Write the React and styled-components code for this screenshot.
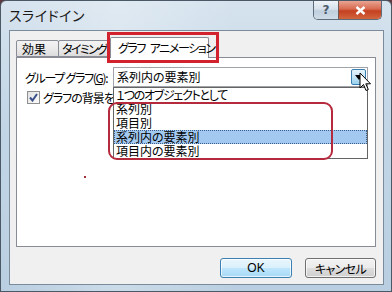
import React from 'react';
import styled, { createGlobalStyle } from 'styled-components';

const GlobalStyle = createGlobalStyle`
    html, body {
        margin: 0;
        padding: 0;
        background: #5a3a40;
    }
    * {
        box-sizing: border-box;
    }
`;

const JP = `"Noto Sans CJK JP", "Noto Sans", "Liberation Sans", sans-serif`;

// Fenêtre principale (cadre Aero)
const Window = styled.div`
    width: 392px;
    height: 292px;
    display: flex;
    flex-direction: column;
    border: 1px solid #4b5866;
    border-radius: 6px 6px 0 0;
    background:
        linear-gradient(90deg, rgba(255,255,255,0) 0%, rgba(255,255,255,0.25) 30%, rgba(255,255,255,0) 60%),
        linear-gradient(180deg, #d6e3ee 0%, #c2d6e6 40%, #b9cfe1 100%);
    font-family: ${JP};
    color: #000;
    overflow: hidden;
`;

const TitleBar = styled.div`
    height: 29px;
    display: flex;
    align-items: flex-start;
    padding: 0 9px 0 8px;
`;

const Title = styled.div`
    font-size: 14px;
    line-height: 29px;
    font-feature-settings: "palt";
    color: #1a1a1a;
    letter-spacing: 0.5px;
`;

const Controls = styled.div`
    margin-left: auto;
    display: flex;
    border: 1px solid #5d6b7a;
    border-top: none;
    border-radius: 0 0 5px 5px;
    overflow: hidden;
    height: 19px;
`;

const CtrlButton = styled.div`
    width: ${(p) => p.w}px;
    display: flex;
    align-items: center;
    justify-content: center;
    background: ${(p) => p.close
        ? 'linear-gradient(180deg, #e8a493 0%, #d8694f 45%, #c4401f 55%, #d2663e 100%)'
        : 'linear-gradient(180deg, #eef3f8 0%, #d6e1ec 45%, #c0cfdd 55%, #cfdce8 100%)'};
    border-left: ${(p) => p.close ? '1px solid #6d5a56' : 'none'};
    color: ${(p) => p.close ? '#fff' : '#4a5a6c'};
    font-family: "DejaVu Sans", sans-serif;
    font-weight: bold;
    font-size: 12px;
`;

const Client = styled.div`
    flex: 1;
    margin: 0 7px 7px 8px;
    background: #f0f0f0;
    border: 1px solid #7a8b9c;
    display: flex;
    flex-direction: column;
    padding: 6px 7px 6px 6px;
`;

const TabStrip = styled.div`
    display: flex;
    align-items: flex-end;
    height: 20px;
    padding-left: 1px;
    position: relative;
    z-index: 2;
`;

const Tab = styled.div`
    position: relative;
    height: ${(p) => (p.active ? 21 : 17)}px;
    width: ${(p) => p.w}px;
    margin-left: -1px;
    margin-bottom: ${(p) => (p.active ? -1 : 0)}px;
    padding-left: ${(p) => p.pad}px;
    border: 1px solid #898c95;
    border-bottom: ${(p) => (p.active ? 'none' : '1px solid #898c95')};
    border-radius: 2px 2px 0 0;
    background: ${(p) => (p.active ? '#fff' : 'linear-gradient(180deg, #f3f3f3 0%, #ebebeb 50%, #dcdcdc 100%)')};
    font-size: 12px;
    letter-spacing: ${(p) => p.ls || 0}px;
    line-height: ${(p) => (p.active ? 19 : 16)}px;
    font-feature-settings: "palt";
    white-space: nowrap;
`;

const TabMark = styled.div`
    position: absolute;
    left: -4px;
    right: -11px;
    top: -6px;
    bottom: -5px;
    border: 3px solid #d2222d;
    pointer-events: none;
`;

const Panel = styled.div`
    position: relative;
    height: 190px;
    background: #fff;
    border: 1px solid #898c95;
    padding: 9px 7px 0 8px;
    display: flex;
    flex-direction: column;
    gap: 2px;
`;

const Row = styled.div`
    display: flex;
    align-items: center;
    font-size: 12px;
    font-feature-settings: "palt";
`;

const Label = styled.div`
    width: 88px;
    white-space: nowrap;
    letter-spacing: -1.3px;
`;

const ComboWrap = styled.div`
    position: relative;
    flex: 1;
`;

const Combo = styled.div`
    height: 20px;
    border: 1px solid #a0a3a9;
    display: flex;
    align-items: center;
    padding: 0 1px 0 3px;
    background: #fff;
`;

const ComboText = styled.div`
    flex: 1;
    line-height: 18px;
`;

const DropButton = styled.div`
    width: 15px;
    height: 16px;
    border: 1px solid #3c7fb1;
    border-radius: 2px;
    background: linear-gradient(180deg, #e5f4fc 0%, #c4e5f6 50%, #98d1ef 100%);
    display: flex;
    align-items: center;
    justify-content: center;
`;

const Cursor = styled.svg`
    position: absolute;
    right: -4px;
    top: 5px;
    z-index: 5;
`;

const DropList = styled.ul`
    position: absolute;
    left: 0;
    right: 0;
    top: 100%;
    margin: 0;
    padding: 0;
    list-style: none;
    background: #fff;
    border: 1px solid #646464;
    z-index: 3;
`;

const DropItem = styled.li`
    height: 14px;
    line-height: 14px;
    padding-left: 2px;
    font-size: 12px;
    font-feature-settings: "palt";
    letter-spacing: ${(p) => (p.tight ? -1.3 : 0)}px;
    white-space: nowrap;
    background: ${(p) => (p.selected ? '#a3c9f1' : 'transparent')};
    outline: ${(p) => (p.selected ? '1px dotted #3a5d8c' : 'none')};
    outline-offset: -1px;
`;

const ListMark = styled.div`
    position: absolute;
    left: -6px;
    top: 14px;
    width: 225px;
    height: 58px;
    border: 2px solid #b52a3c;
    border-radius: 9px;
    pointer-events: none;
    z-index: 4;
`;

const CheckRow = styled(Row)`
    padding-left: 2px;
    letter-spacing: -1px;
    white-space: nowrap;
`;

const CheckBox = styled.div`
    width: 13px;
    height: 13px;
    margin-right: 3px;
    border: 1px solid #8f8f8f;
    background: linear-gradient(135deg, #e2e2e2 0%, #fbfbfb 100%);
    display: flex;
    align-items: center;
    justify-content: center;
`;

const Stray = styled.div`
    position: absolute;
    left: 67px;
    top: 118px;
    width: 2px;
    height: 2px;
    background: #a3303a;
`;

const ButtonRow = styled.div`
    display: flex;
    justify-content: flex-end;
    gap: 13px;
    margin-top: 11px;
`;

const Button = styled.div`
    width: ${(p) => p.w}px;
    height: 20px;
    border: 1px solid ${(p) => (p.primary ? '#3c7fb1' : '#707070')};
    border-radius: 3px;
    background: ${(p) => (p.primary
        ? 'linear-gradient(180deg, #eaf6fd 0%, #d9f0fc 50%, #bee6fd 51%, #a7d9f5 100%)'
        : 'linear-gradient(180deg, #f2f2f2 0%, #ebebeb 50%, #dddddd 51%, #cfcfcf 100%)')};
    box-shadow: inset 0 0 0 1px rgba(255,255,255,0.7);
    display: flex;
    align-items: center;
    justify-content: center;
    font-size: 12px;
    letter-spacing: ${(p) => (p.latin ? 0 : -0.6)}px;
    font-feature-settings: "palt";
    font-family: ${(p) => (p.latin ? '"Liberation Sans", sans-serif' : JP)};
`;

const App = () => {
    const items = ['１つのオブジェクトとして', '系列別', '項目別', '系列内の要素別', '項目内の要素別'];

    return (
        <>
            <GlobalStyle />
            <Window>
                <TitleBar>
                    <Title>スライドイン</Title>
                    <Controls>
                        <CtrlButton w={24}>?</CtrlButton>
                        <CtrlButton w={43} close>
                            <svg width="11" height="9" viewBox="0 0 11 9">
                                <path d="M1.5 1 L9.5 8 M9.5 1 L1.5 8" stroke="#fff" strokeWidth="2.4" />
                            </svg>
                        </CtrlButton>
                    </Controls>
                </TitleBar>
                <Client>
                    <TabStrip>
                        <Tab w={43} pad={5}>効果</Tab>
                        <Tab w={53} pad={3} ls={-1.6}>タイミング</Tab>
                        <Tab active w={99} pad={7} ls={-1.4}>
                            グラフ{'\u2002'}アニメーション
                            <TabMark />
                        </Tab>
                    </TabStrip>
                    <Panel>
                        <Row>
                            <Label>グループ グラフ(<u>G</u>):</Label>
                            <ComboWrap>
                                <Combo>
                                    <ComboText>系列内の要素別</ComboText>
                                    <DropButton>
                                        <svg width="8" height="5" viewBox="0 0 8 5">
                                            <path d="M0 0 H8 L4 5 Z" fill="#000" />
                                        </svg>
                                    </DropButton>
                                </Combo>
                                <Cursor width="13" height="21" viewBox="0 0 13 21">
                                    <path d="M1 1 L1 16 L4.5 12.5 L7 18.5 L9.3 17.5 L6.8 11.8 L11.5 11.8 Z"
                                        fill="#fff" stroke="#000" strokeWidth="1" strokeLinejoin="round" />
                                </Cursor>
                                <DropList>
                                    {items.map((item, i) => (
                                        <DropItem key={item} selected={i === 3} tight={i === 0}>{item}</DropItem>
                                    ))}
                                    <ListMark />
                                </DropList>
                            </ComboWrap>
                        </Row>
                        <CheckRow>
                            <CheckBox>
                                <svg width="9" height="9" viewBox="0 0 9 9">
                                    <path d="M1 4.5 L3.5 7.5 L8 1" fill="none" stroke="#3b4f8a" strokeWidth="2" />
                                </svg>
                            </CheckBox>
                            グラフの背景を描画する
                        </CheckRow>
                        <Stray />
                    </Panel>
                    <ButtonRow>
                        <Button primary latin w={72}>OK</Button>
                        <Button w={71}>キャンセル</Button>
                    </ButtonRow>
                </Client>
            </Window>
        </>
    );
};

export default App;
